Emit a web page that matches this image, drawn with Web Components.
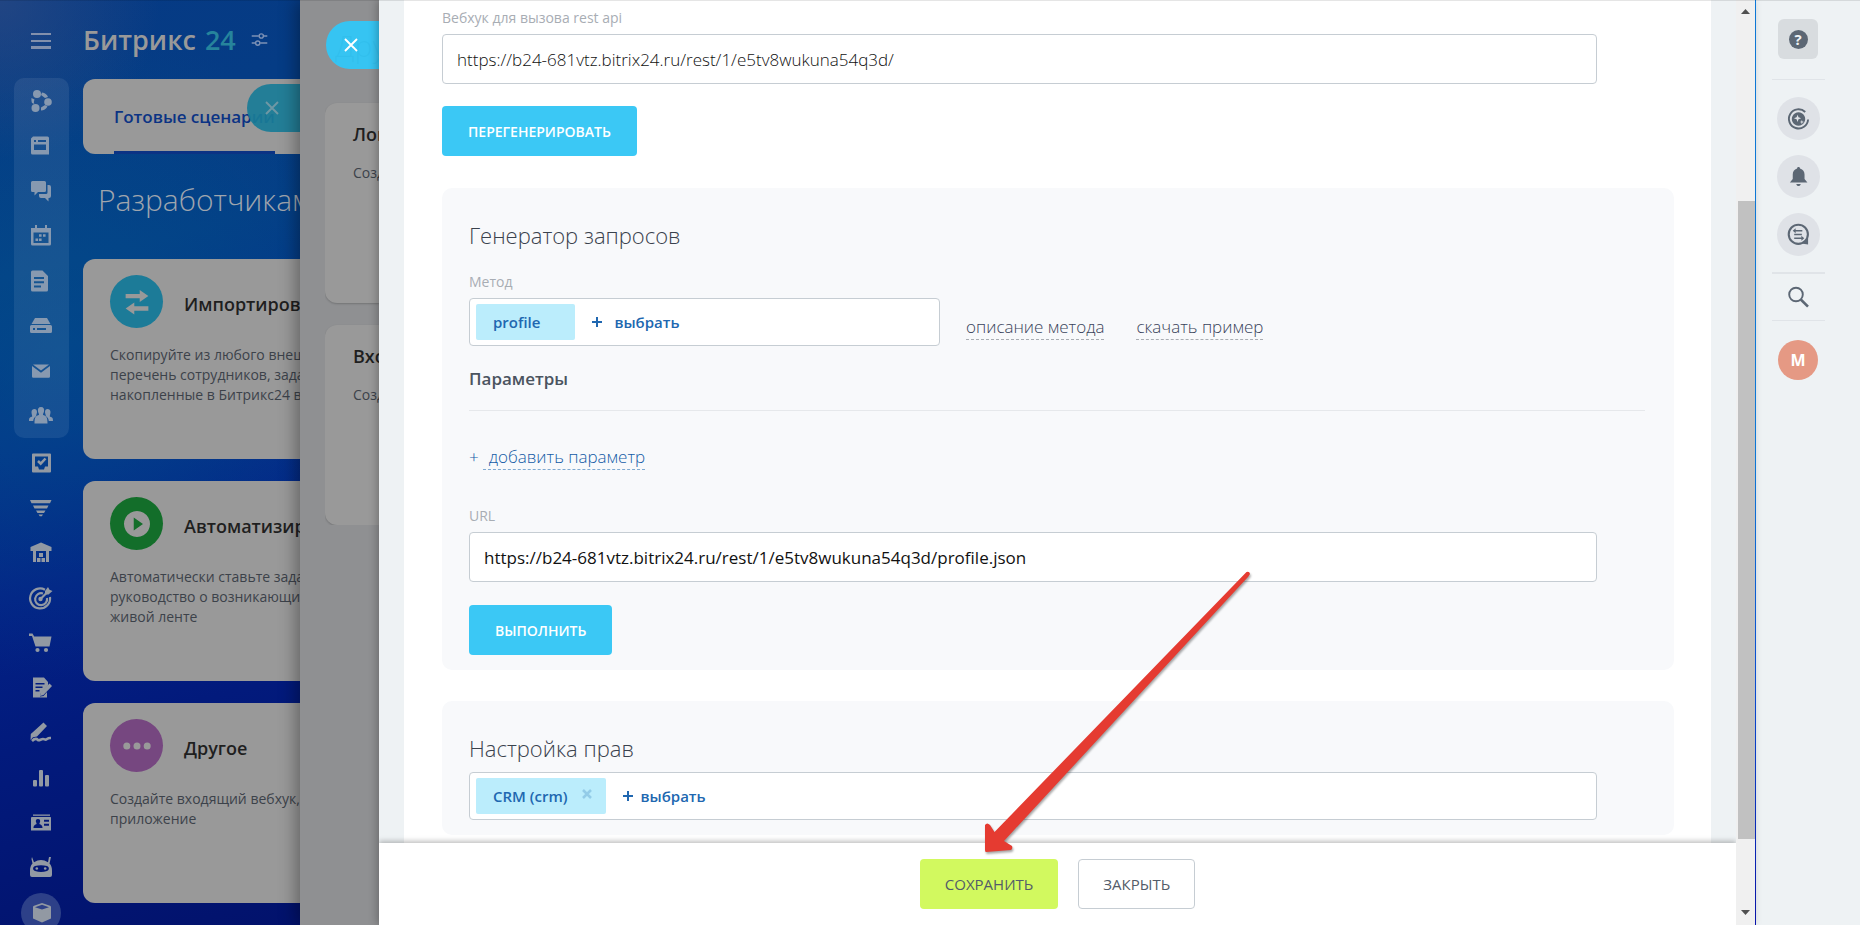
<!DOCTYPE html>
<html lang="ru">
<head>
<meta charset="utf-8">
<title>Битрикс24 — входящий вебхук</title>
<style>
html,body{height:100%;margin:0}
body{font-family:"Open Sans","Noto Sans",sans-serif;overflow:hidden}
</style>
</head>
<body>
<app-shell></app-shell>
<script>
const define = (name, css, html) => customElements.define(name, class extends HTMLElement {
  constructor() {
    super();
    const t = document.createElement('template');
    t.innerHTML = `<style>*{box-sizing:border-box}${css}</style>${typeof html === 'function' ? html(this) : html}`;
    this.attachShadow({mode: 'open'}).append(t.content.cloneNode(true));
  }
});

const ICONS = {
  menu: '<path d="M2 4h20v2H2zM2 11h20v2H2zM2 17h20v3H2z"/>',
  sliders: '<g fill="none" stroke="currentColor" stroke-width="2"><path d="M1 7h10M18 7h5M1 17h5M13 17h10"/><circle cx="14.500" cy="7" r="3"/><circle cx="9.500" cy="17" r="3"/></g>',
  hub: '<circle cx="8" cy="5" r="4"/><circle cx="19" cy="13" r="3.800"/><circle cx="6.500" cy="19" r="4"/><path d="M13 3.500c3 .5 5 2 6 4.500l-3 1-4-3zM2.500 9l3 1.500c-.8 2-.8 3.500 0 4.500L3 14c-.6-1.500-.7-3.300-.5-5zM12 18.500l4-2.500 2.500 1.500c-1.500 2.500-3.700 4-6.500 4z"/>',
  feed: '<path fill-rule="evenodd" d="M4 2.500h14.500a1.500 1.500 0 0 1 1.500 1.500v16.500H3.500A1.500 1.500 0 0 1 2 19V4.500zM5 6v2h2V6zm4 0v2h8V6zM5 10.500v5.500h12v-5.500z"/>',
  chat: '<path d="M3.500 2h12A1.500 1.500 0 0 1 17 3.500v8a1.500 1.500 0 0 1-1.500 1.500H9l-3.500 3.500V13h-2A1.500 1.500 0 0 1 2 11.500v-8A1.500 1.500 0 0 1 3.500 2z"/><path d="M18.500 6H20a2 2 0 0 1 2 2v9a2 2 0 0 1-2 2h-.5v3.500L16 19h-4a2 2 0 0 1-2-2v-2h7a1.500 1.500 0 0 0 1.500-1.500z"/>',
  calendar: '<path fill-rule="evenodd" d="M2 4h20v16a1.500 1.500 0 0 1-1.500 1.500h-17A1.500 1.500 0 0 1 2 20zM4.500 8.500V19h15V8.500z"/><path d="M6 1h2v4H6zM16 1h2v4h-2zM10 10.200h2.600v2.600H10zM14 10.200h2.600v2.600H14zM6.500 14.500h2.600v2.600H6.500zM10 14.500h2.600v2.600H10z"/>',
  doc: '<path fill-rule="evenodd" d="M3.500 1.500h10L19 7v14a1.500 1.500 0 0 1-1.500 1.500h-14A1.500 1.500 0 0 1 2 21V3a1.500 1.500 0 0 1 1.500-1.500zM5 8v2h10V8zm0 4.200v2h10v-2zm0 4.300v2h7v-2z"/>',
  drive: '<path fill-rule="evenodd" d="M6 4h12l3.500 6h-19zM2.500 11h19A1.500 1.500 0 0 1 23 12.500v5a1.500 1.500 0 0 1-1.500 1.500h-19A1.500 1.500 0 0 1 1 17.500v-5A1.500 1.500 0 0 1 2.500 11zM4 14v2h2v-2zm4 0v2h9v-2z"/>',
  mail: '<path d="M4 5.500h16l-8 6zM3 7l9 6.800L21 7v10.500a1.200 1.200 0 0 1-1.200 1.200H4.200A1.200 1.200 0 0 1 3 17.500z"/>',
  people: '<path d="M12 3c2.500 0 3.500 2 3 4.500-.3 1.500-1 2.200-1 3.500 3 1 4.500 1.500 4.500 8.500h-13c0-7 1.500-7.500 4.500-8.500 0-1.300-.7-2-1-3.500C8.500 5 9.500 3 12 3zM5.500 5c1.500 0 2.500 1 2.500 3 0 1.500-.8 2.500-.8 4C5 13.500 4.500 15 4.200 17H0c0-2.500 0-3.500 3.200-4.500 0-1.500-.7-2.500-.7-4.500C2.500 6 3.800 5 5.500 5zM18.500 5c1.700 0 3 1 3 3 0 2-.7 3-.7 4.500C24 13.500 24 14.500 24 17h-4.200c-.3-2-.8-3.500-3-5 0-1.500-.8-2.500-.8-4 0-2 1-3 2.500-3z"/>',
  task: '<path fill-rule="evenodd" d="M4 2.500h17a1 1 0 0 1 1 1v17a1 1 0 0 1-1 1H4a1 1 0 0 1-1-1v-17a1 1 0 0 1 1-1zM6 5.500v10h3l1 3h5l1-3h3v-10z"/><path d="M9 10l2.700 2.700 4.800-5.200" fill="none" stroke="currentColor" stroke-width="2.500"/>',
  funnel: '<path d="M1 4h21.500l-1.500 3.200H2.500zM4 9.500h15.500l-1.500 3H5.500zM7 14.500h9.500l-1.500 2.500H8.500zM9.500 18.500h4.500l-1.200 1.700h-2z"/>',
  store: '<path fill-rule="evenodd" d="M12 1.500L22.500 6v4H20v11H4V10H1.500V6zM7 10v11h10V10z"/><path d="M8 17h3.500v4H8zM12.500 17H16v4h-3.500zM10 12h4v4h-4z"/>',
  target: '<g fill="none" stroke="currentColor" stroke-width="2.200"><path d="M16 3.700A10 10 0 1 0 21 11"/><path d="M14 7.500a6 6 0 1 0 4 4.500"/><path d="M11 13.500l8-8"/></g><circle cx="11.500" cy="13" r="2.200"/><path d="M16 5l3-4 1.500 2.800L23.500 5l-4 3.500L16 8.500z"/>',
  cart: '<path d="M0 2.500h3.500l1.700 3H22.500l-2 10H6.500L3 5H0z"/><circle cx="8.500" cy="19" r="2.100"/><circle cx="17" cy="19" r="2.100"/>',
  edit: '<path fill-rule="evenodd" d="M4 1.500h11l4 4.500v3.500l-7 7.500-1 3.500 3.500-.5L18 16v5.500H4zM6.500 7v1.500h9V7zm0 3.500V12h7v-1.500zm0 3.500v1.500h4V14z"/><path d="M20.500 7.500l2.500 2.500-8.500 9-3.500 1 1-3.700z"/>',
  sign: '<path d="M14.500 1.500l3.500 3.500L8 15.500l-4 .8L1.500 19l.3-6z"/><path d="M3 20c3-3 5-2 6-1s3-1 5-1 2 1.500 4 0 3-1 4-1" fill="none" stroke="currentColor" stroke-width="2.600"/>',
  chart: '<rect x="4" y="14" width="4" height="6.500" rx="1"/><rect x="10" y="4" width="4" height="16.500" rx="1"/><rect x="16" y="9" width="4" height="11.500" rx="1"/>',
  card: '<path d="M4 3.500h17v1.300H4z"/><path fill-rule="evenodd" d="M3 6h18.500A.8.8 0 0 1 22 7v12.500H2V7a1 1 0 0 1 1-1zM9 8c-2 0-2.500 1.500-2 3 .3 1 .6 1.200.6 2C5 14 4.500 15 4.500 17h9c0-2-.5-3-3.100-4 0-.8.4-1 .6-2 .5-1.500 0-3-2-3zm6 .7v2h5v-2zm0 4v2h5v-2z"/>',
  robot: '<path fill-rule="evenodd" d="M3 1l2 5.200a13 13 0 0 1 14 0L20 1h2l-1.500 6.500C22.500 9.500 23 12 23 15v4a2 2 0 0 1-2 2H3a2 2 0 0 1-2-2v-4c0-3 .6-5.500 2.500-7.500L2.500 3zM6 10c-2.500 1-2.500 4 0 5 4 1.200 8 1.200 12 0 2.500-1 2.500-4 0-5-4-1-8-1-12 0z"/><circle cx="7.800" cy="12.500" r="1.300"/><circle cx="16.200" cy="12.500" r="1.300"/>',
  box: '<path fill-rule="evenodd" d="M13 2l8 2.700c.7.200 1 .6 1 1.300v11.500l-9 4-9-4V6c0-.7.3-1.100 1-1.300zM13 3.800L6 6.200 13 8.500l7-2.300z"/>',
  close: '<path d="M4 4l16 16M20 4L4 20" fill="none" stroke="currentColor" stroke-width="2.500"/>',
  copilot: '<path d="M19 5.200A10 10 0 1 0 22 13" fill="none" stroke="currentColor" stroke-width="2"/><path fill-rule="evenodd" d="M12 5.500a7 7 0 1 0 .01 0zM11 8l1 2.800 2.800 1-2.800 1-1 2.800-1-2.800-2.800-1 2.800-1zM15.500 13.500l.6 1.600 1.600.6-1.600.6-.6 1.600-.6-1.600-1.600-.6 1.600-.6z"/>',
  bell: '<path d="M12 2c1 0 1.600.7 1.600 1.600C16.800 4.400 18.300 7 18.300 10v4.500l3 3.800H3l3-3.800V10c0-3 1.400-5.600 4.500-6.400C10.500 2.700 11 2 12 2zM9.700 19.800h4.600c-.3 1.500-1.200 2.200-2.300 2.200s-2-.7-2.300-2.200z"/>',
  find: '<circle cx="11.800" cy="11.800" r="10" fill="none" stroke="currentColor" stroke-width="2.200"/><path d="M22 16v6.500l-7-1zM6 8l3-2.600v1.800h7v1.600H9v1.800zM7.500 11.200h8v1.600h-8zM18 16l-3 2.600v-1.800H7.500v-1.600H15v-1.800z"/>',
  search: '<g fill="none" stroke="currentColor"><circle cx="10" cy="9.500" r="6.800" stroke-width="1.900"/><path d="M14.800 14.500l7.200 7.200" stroke-width="2.600"/></g>',
  swap: '<path d="M1.500 4.500h13V1l8 5.500-8 5.500V8.500h-13zM22.500 20H9.500v3.500l-8-5.500 8-5.500V16h13z"/>',
  play: '<path fill-rule="evenodd" d="M12 0a12 12 0 1 0 .01 0zM9 6l8.500 6L9 18z"/>',
  dots: '<circle cx="1.800" cy="12" r="3.500"/><circle cx="12" cy="12" r="3.500"/><circle cx="22.200" cy="12" r="3.500"/>'
};
const svg = (name, size) => `<svg viewBox="0 0 24 24" width="${size}" height="${size}" fill="currentColor" aria-hidden="true" overflow="visible">${ICONS[name]}</svg>`;

/* Narrow navigation on the left */
define('nav-rail', `
:host{display:flex;flex-direction:column;width:83px;flex:none;padding:28px 14px 0;color:#9299a3}
a{display:flex;align-items:center;justify-content:center;height:45px;padding-right:2px;color:inherit}
svg{display:block}
.menu{height:26px;width:55px;background:none;border:0;padding:0 2px 0 0;color:#8290ac;display:flex;justify-content:center;align-items:center}
hr{width:18px;height:1px;border:0;margin:16px 0 8px 17px;background:#2b5590}
.pinned{background:rgba(255,255,255,.08);border-radius:10px;color:#8799b0}
.menu,.pinned,.rest{flex:none}
.rest{margin-top:2px}
.current span{display:flex;align-items:center;justify-content:center;width:40px;height:40px;border-radius:50%;background:#2d4088}
`, `<button class="menu" aria-label="Меню">${svg('menu', 24)}</button><hr>
<nav class="pinned">${['hub','feed','chat','calendar','doc','drive','mail','people'].map(i => `<a href="#">${svg(i, 24)}</a>`).join('')}</nav>
<nav class="rest">${['task','funnel','store','target','cart','edit','sign','chart','card','robot'].map(i => `<a href="#">${svg(i, 24)}</a>`).join('')}<a class="current" href="#"><span>${svg('box', 24)}</span></a></nav>`);

define('scenario-card', `
:host{display:block;height:200px;background:#999;border-radius:12px 0 0 12px;padding:16px 0 0 27px;white-space:nowrap;overflow:hidden;flex:none}
.head{display:flex;align-items:center;gap:21px;height:53px}
.disc{display:flex;align-items:center;justify-content:center;width:53px;height:53px;flex:none;border-radius:50%;background:var(--disc);color:#999}
h3{margin:4px 0 0;font-size:18px;line-height:24px;font-weight:600;color:#1f1f1f}
p{margin:17px 0 0;font-size:14px;line-height:20px;color:#3c424a}
`, el => `<div class="head"><span class="disc">${svg(el.getAttribute('icon'), el.getAttribute('icon') === 'dots' ? 24 : 26)}</span><h3><slot name="title"></slot></h3></div><p><slot></slot></p>`);

/* Rounded tab that closes a slider */
define('close-tab', `
:host{display:block}
button{display:flex;align-items:center;width:53px;height:48px;padding:0 0 0 16px;border:0;border-radius:24px 0 0 24px;background:var(--tab);color:var(--cross)}
`, `<button aria-label="Закрыть слайдер">${svg('close', 18)}</button>`);

define('portal-page', `
:host{display:flex;flex-direction:column;flex:1;min-width:0;overflow:hidden;position:relative}
header{display:flex;align-items:center;height:79px;gap:9px;font-size:27px;font-weight:600;color:#999;white-space:nowrap;flex:none}
header b{font-weight:600;color:#26849c}
header svg{margin-left:6px;color:#7c91b5}
nav{display:flex;height:75px;flex:none;background:#999;border-radius:12px 0 0 12px;padding-left:31px}
nav a{display:flex;align-items:center;height:75px;padding-top:3px;border-bottom:3px solid #0b3384;color:#0b3384;font-size:17px;font-weight:600;white-space:nowrap;text-decoration:none}
h1{margin:24px 0 37px 15px;font-size:30px;line-height:44px;font-weight:300;color:#9fa5ae;white-space:nowrap;flex:none}
main{display:flex;flex-direction:column;gap:22px}
close-tab{position:absolute;right:0;top:84px;--tab:rgba(26,124,151,.93);--cross:#6f98a5}
`, `<header>Битрикс <b>24</b>${svg('sliders', 17)}</header>
<nav><a href="#">Готовые сценарии</a></nav>
<h1>Разработчикам</h1>
<main>
<scenario-card icon="swap" style="--disc:#1c7b98"><span slot="title">Импортировать</span>Скопируйте из любого внешнего<br>перечень сотрудников, задачи<br>накопленные в Битрикс24 в</scenario-card>
<scenario-card icon="play" style="--disc:#136e2a"><span slot="title">Автоматизировать</span>Автоматически ставьте задачи<br>руководство о возникающих<br>живой ленте</scenario-card>
<scenario-card icon="dots" style="--disc:#764780"><span slot="title">Другое</span>Создайте входящий вебхук,<br>приложение</scenario-card>
</main>
<close-tab></close-tab>`);

define('stub-card', `
:host{display:block;height:200px;flex:none;background:#999;border-radius:12px 0 0 12px;padding:18px 0 0 28px;box-shadow:0 1px 2px rgba(0,0,0,.2);white-space:nowrap;overflow:hidden}
h3{margin:0;font-size:18px;line-height:26px;font-weight:600;color:#1f1f1f}
p{margin:16px 0 0;font-size:14px;line-height:20px;color:#3c424a}
`, `<h3><slot name="title"></slot></h3><p><slot></slot></p>`);

/* Slider that lies between the portal and the open form */
define('back-slider', `
:host{display:flex;flex-direction:column;width:79px;flex:none;padding-left:25px;background:#8f9092;box-shadow:-4px 0 16px rgba(0,0,0,.35);position:relative}
.clip{display:flex;flex-direction:column;gap:22px;overflow:hidden}
h2{margin:24px 0 13px;padding-left:10px;font-size:30px;line-height:44px;font-weight:300;color:#333}
close-tab{position:absolute;right:0;top:21px;--tab:rgba(50,199,248,.95);--cross:#fff}
`, `<div class="clip"><h2>Другое</h2>
<stub-card><span slot="title">Локальное</span>Создайте</stub-card>
<stub-card><span slot="title">Входящий</span>Создайте</stub-card></div>
<close-tab></close-tab>`);

define('text-field', `
:host{display:block}
label{display:block;font-size:14px;line-height:20px;color:#a8adb4}
input{display:block;width:100%;height:50px;margin-top:6px;padding:0 14px;border:1px solid #c6cdd3;border-radius:4px;background:#fff;font:var(--weight,300) 17px "Open Sans",sans-serif;color:#111;outline:0}
`, el => `<label for="f">${el.getAttribute('label')}</label><input id="f" type="text" value="${el.getAttribute('value')}">`);

define('ui-button', `
:host{display:block}
button{height:50px;padding:0 25px;border:1px solid var(--edge,transparent);border-radius:4px;background:var(--fill,#3bc8f5);color:var(--ink,#fff);font:600 14px "Open Sans",sans-serif;display:block;white-space:nowrap}
:host([quiet]) button{font-weight:400;font-size:15px;padding:0 24px}
`, `<button><slot></slot></button>`);

define('tag-field', `
:host{display:flex;align-items:center;height:48px;padding:0 6px;border:1px solid #c6cdd3;border-radius:4px;background:#fff;font-size:15px;font-weight:600;color:#2067b0}
.tag{display:flex;align-items:center;height:36px;padding:0 14px 0 17px;gap:14px;border-radius:2px;background:#bbedfc}
.tag.plain{padding-right:35px}
.x{border:0;background:none;padding:0;width:10px;height:20px;margin-top:-4px;display:flex;align-items:center;color:#93cce8}
.add{display:flex;align-items:center;gap:var(--gap,12px);margin-left:17px;color:inherit;text-decoration:none}
.add i{width:10px;height:10px;background:linear-gradient(currentColor,currentColor) center/10px 2px no-repeat,linear-gradient(currentColor,currentColor) center/2px 10px no-repeat}
`, el => `<span class="tag ${el.hasAttribute('removable') ? '' : 'plain'}"><slot></slot>${el.hasAttribute('removable') ? `<button class="x" aria-label="Удалить"><svg viewBox="0 0 10 10" width="10" height="10"><path d="M1 1l8 8M9 1L1 9" stroke="currentColor" stroke-width="2.500"/></svg></button>` : ''}</span><a class="add" href="#"><i></i>выбрать</a>`);

define('form-section', `
:host{display:block;background:#f8f9fb;border-radius:10px;padding:0 29px 15px 27px}
h2{margin:0 0 21px;padding-top:31px;font-size:22px;line-height:32px;font-weight:300;color:#3a424d}
:host([compact]) h2{margin-bottom:8px}
`, el => `<h2>${el.getAttribute('heading')}</h2><slot></slot>`);

define('webhook-form', `
:host{display:block;flex:1;min-height:0;overflow:hidden;background:#fff;margin:0 25px;padding:8px 37px 0 38px}
text-field.top{margin-right:77px}
ui-button.regen{margin:22px 0 32px}
.label{font-size:14px;line-height:20px;color:#a8adb4}
.row{display:flex;align-items:flex-end;gap:32px;margin-top:6px}
.row tag-field{width:471px;margin-right:-6px}
.row a,.add{font-size:17px;line-height:24px;font-weight:300;color:#38435a;text-decoration:none}
.row a{border-bottom:1px dashed #a9adb3;margin-bottom:6px}
h3{margin:21px 0 0;padding-bottom:19px;border-bottom:1px solid #e6e8eb;font-size:17px;line-height:24px;font-weight:600;color:#4b545f}
.add{display:inline-block;margin:34px 0 0;color:#145ba6}
.add span{border-bottom:1px dashed #7fa9d1;padding:0 0 1px 6px;margin-left:4px}
.url{margin:37px 48px 23px 0;--weight:400}
form-section + form-section{margin-top:31px}
.rights{margin-right:48px;--gap:8px}
`, `<text-field class="top" label="Вебхук для вызова rest api" value="https://b24-681vtz.bitrix24.ru/rest/1/e5tv8wukuna54q3d/"></text-field>
<ui-button class="regen">ПЕРЕГЕНЕРИРОВАТЬ</ui-button>
<form-section heading="Генератор запросов">
<div class="label">Метод</div>
<div class="row"><tag-field>profile</tag-field><a href="#">описание метода</a><a href="#">скачать пример</a></div>
<h3>Параметры</h3>
<a class="add" href="#">+<span>добавить параметр</span></a>
<text-field class="url" label="URL" value="https://b24-681vtz.bitrix24.ru/rest/1/e5tv8wukuna54q3d/profile.json"></text-field>
<ui-button>ВЫПОЛНИТЬ</ui-button>
</form-section>
<form-section compact heading="Настройка прав"><tag-field class="rights" removable>CRM (crm)</tag-field></form-section>`);

define('form-slider', `
:host{display:flex;flex:1;min-width:0;position:relative;background:#eef2f4;box-shadow:-2px 0 8px rgba(0,0,0,.25)}
.body{display:flex;flex-direction:column;flex:1;min-width:0}
footer{display:flex;justify-content:center;align-items:center;gap:20px;height:82px;flex:none;background:#fff;box-shadow:0 -2px 5px rgba(0,0,0,.25);position:relative;clip-path:inset(-8px 0 0 0)}
.scroll{display:flex;flex-direction:column;align-items:center;width:19px;flex:none;background:#f0f0f0;padding:9px 0 10px}
.scroll span{flex:187}
.scroll b{flex:639;width:17px;margin-left:2px;background:#c1c1c1}
.scroll em{flex:71}
.arrow{position:absolute;right:504px;bottom:70px;pointer-events:none}
`, `<div class="body"><webhook-form></webhook-form>
<footer><ui-button quiet style="--fill:#d2f95f;--ink:#535c69">СОХРАНИТЬ</ui-button><ui-button quiet style="--fill:#fff;--ink:#535c69;--edge:#c6cdd3">ЗАКРЫТЬ</ui-button></footer></div>
<div class="scroll"><svg width="9" height="5"><path d="M0 5L4.500 0 9 5z" fill="#505050"/></svg><span></span><b></b><em></em><svg width="9" height="5"><path d="M0 0L4.500 5 9 0z" fill="#505050"/></svg></div>
<svg class="arrow" width="266" height="285" viewBox="0 0 266 285" style="filter:drop-shadow(1px 2px 1px rgba(0,0,0,.35))"><path d="M261.500 2Q264.500 1 265 4L263 7 19 271 27 276Q28 279 26 280L1 282Q0 282 0 280L0 255Q2 252 5 255L9.500 262z" fill="#e53b31"/></svg>`);

/* Tools column on the right */
define('tool-bar', `
:host{display:flex;flex-direction:column;align-items:center;width:105px;flex:none;padding:19px 35px 0 15px;background:#eef2f4;border-left:1px solid #0a6fe0;border-image:linear-gradient(#0f80e6 50%,#0a50e0 75%,#0a14b4) 1;color:#5c6774}
button{display:flex;align-items:center;justify-content:center;border:0;padding:0;color:inherit;flex:none}
.help{width:40px;height:40px;border-radius:6px;background:#d8dcdf}
.help span{width:19px;height:19px;border-radius:50%;background:#5c6774;color:#eef2f4;font:700 15px/19px "Open Sans",sans-serif}
hr{width:53px;height:1px;margin:20px 0 17px;border:0;background:#e0e4e8;flex:none}
.round{width:43px;height:43px;border-radius:50%;background:#dfe2e7}
.round + .round{margin-top:15px}
.search{background:none;height:24px;width:24px}
.search + hr{margin:11px 0 19px}
.round + hr{height:2px;margin:16px 0 11px}
.me{width:40px;height:40px;border-radius:50%;background:#e59984;color:#fff;font:700 16px "Open Sans",sans-serif}
`, `<button class="help" aria-label="Помощь"><span>?</span></button><hr>
${['copilot','bell','find'].map(i => `<button class="round" aria-label="${i}">${svg(i, 23)}</button>`).join('')}<hr>
<button class="search" aria-label="Поиск">${svg('search', 24)}</button><hr><button class="me">M</button>`);

define('app-shell', `
:host{display:flex;height:100vh;overflow:hidden;position:relative}
:host::after{content:"";position:absolute;inset:0 0 auto;height:1px;background:rgba(0,0,0,.1)}
.under{display:flex;width:300px;flex:none;background:radial-gradient(circle at 0 0,rgba(60,80,130,.5),transparent 160px),radial-gradient(circle at 20% 38%,rgba(0,84,140,.5),transparent 330px),linear-gradient(165deg,#063a84 0%,#043e86 28%,#04338a 45%,#032286 60%,#021a7c 75%,#02126c)}
`, `<div class="under"><nav-rail></nav-rail><portal-page></portal-page></div>
<back-slider></back-slider><form-slider></form-slider><tool-bar></tool-bar>`);
</script>
</body>
</html>
